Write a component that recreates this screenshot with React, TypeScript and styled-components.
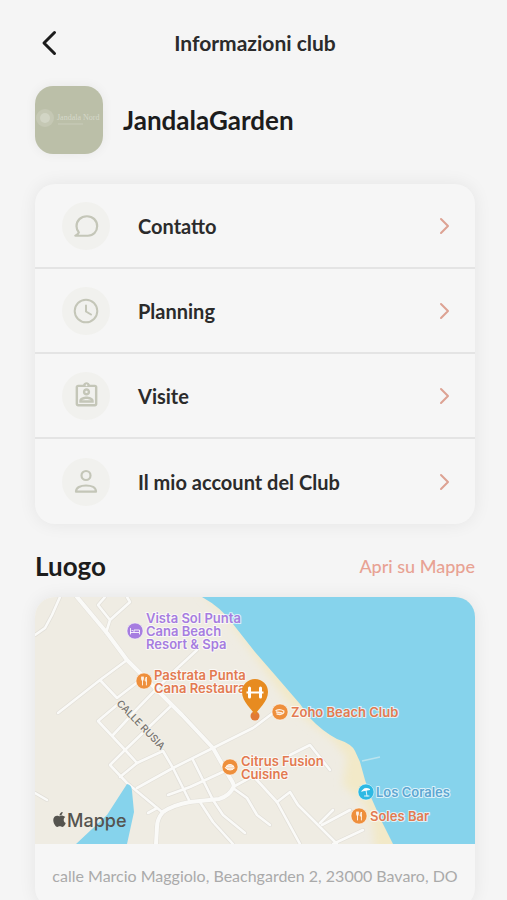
import React from "react";
import styled, { createGlobalStyle } from "styled-components";
import { FaApple } from "react-icons/fa";
import { MdOutlineAssignmentInd } from "react-icons/md";

const GlobalStyle = createGlobalStyle`
  *, *::before, *::after { box-sizing: border-box; }
  body { margin: 0; background: #f5f5f5; color: #2b2b2b; font-family: Lato, "Liberation Sans", sans-serif; }
`;

const Page = styled.div`
  height: 100vh;
  overflow-y: auto;
  scrollbar-width: none;
  padding: 20px 32px 32px 35px;
`;

const TopBar = styled.header`
  display: grid;
  grid-template-columns: 48px 1fr 48px;
  align-items: center;
  height: 46px;
`;

const BackButton = styled.button`
  display: flex;
  padding: 0 0 0 6px;
  border: 0;
  background: none;
  color: #1c1c1c;
`;

const Title = styled.h1`
  margin: 0;
  text-align: center;
  font-size: 21px;
  line-height: 24px;
  font-weight: 700;
`;

const ClubHeader = styled.section`
  display: flex;
  align-items: center;
  gap: 20px;
  margin: 20px 0 30px;
`;

const Logo = styled.svg`
  flex: none;
  border-radius: 18px;
  box-shadow: 0 0 12px rgba(0, 0, 0, 0.06);
`;

const Heading = styled.h2`
  margin: 0;
  font-size: 26px;
  line-height: 32px;
  font-weight: 700;
  color: #1c1c1c;
`;

const Card = styled.div`
  overflow: hidden;
  border-radius: 20px;
  background: #f6f6f6;
  box-shadow: 0 0 18px rgba(0, 0, 0, 0.07);
`;

const Menu = styled(Card).attrs({ as: "nav" })``;

const MenuRow = styled.button`
  display: flex;
  align-items: center;
  width: 100%;
  height: 85px;
  padding: 0 24px 0 27px;
  border: 0;
  background: none;
  color: inherit;
  font: inherit;
  text-align: left;

  &:not(:last-child) { border-bottom: 2px solid #e4e4e4; }
`;

const IconDisc = styled.span`
  display: flex;
  align-items: center;
  justify-content: center;
  width: 48px;
  height: 48px;
  border-radius: 50%;
  background: #f1f1ee;
  color: #c4c6b8;
`;

const RowLabel = styled.span`
  flex: 1;
  margin-left: 28px;
  font-size: 20px;
  line-height: 24px;
  font-weight: 700;
`;

const SectionHead = styled.div`
  display: flex;
  align-items: center;
  justify-content: space-between;
  margin: 26px 0 15px;
`;

const MapLink = styled.a`
  font-size: 18px;
  line-height: 24px;
  font-weight: 500;
  color: #e8a293;
  text-decoration: none;
`;

const MapDrawing = styled.svg`
  display: block;
  width: 100%;
  height: 247px;
`;

const PlaceText = styled.text`
  font-family: Inter, sans-serif;
  font-size: 13px;
  font-weight: 600;
  paint-order: stroke;
  stroke: #ffffff;
  stroke-opacity: 0.7;
  stroke-width: 2px;
  stroke-linejoin: round;
`;

const StreetText = styled.text`
  font-family: Inter, sans-serif;
  font-size: 10px;
  font-weight: 500;
  fill: #77746f;
  paint-order: stroke;
  stroke: #f3f0e8;
  stroke-width: 2px;
`;

const BrandText = styled.text`
  font-family: Inter, sans-serif;
  font-size: 18px;
  font-weight: 500;
  fill: #55544f;
`;

const Address = styled.address`
  padding: 20px 12px;
  font-size: 16px;
  line-height: 24px;
  font-style: normal;
  text-align: center;
  color: #aaaaaa;
`;

const ChatIcon = () => (
  <svg width="26" height="26" viewBox="0 0 28 28" fill="none" stroke="currentColor" strokeWidth="2.4" strokeLinejoin="round">
    <path d="M2.5 24.500H16C21.800 24.500 26 20.200 26 14.200S21.500 3.500 15 3.500C8.300 3.500 3.800 8.300 3.800 14.200c0 2.800.9 4.800 2.500 6.700-.6 1.700-1.800 2.900-3.800 3.600Z" />
  </svg>
);

const ClockIcon = () => (
  <svg width="28" height="28" viewBox="0 0 28 28" fill="none" stroke="currentColor" strokeWidth="2" strokeLinecap="round">
    <circle cx="14" cy="14" r="11.3" />
    <path d="M14 8.500v6l5 3" />
  </svg>
);

const PersonIcon = () => (
  <svg width="28" height="28" viewBox="0 0 28 28" fill="none" stroke="currentColor" strokeWidth="2.2" strokeLinejoin="round">
    <circle cx="14" cy="7.500" r="4.500" />
    <path d="M4 23.700H24C24 19.500 19.500 17.500 14 17.500S4 19.500 4 23.700Z" />
  </svg>
);

const Chevron = () => (
  <svg width="13" height="20" viewBox="0 0 13 20" fill="none" stroke="#dda293" strokeWidth="2" strokeLinecap="round" strokeLinejoin="round">
    <path d="m3 3 7 7-7 7" />
  </svg>
);

const rows = [
  { label: "Contatto", icon: <ChatIcon /> },
  { label: "Planning", icon: <ClockIcon /> },
  { label: "Visite", icon: <MdOutlineAssignmentInd size={29} /> },
  { label: "Il mio account del Club", icon: <PersonIcon /> },
];

const roads = [
  "M25 0 17 18 10 31 0 38",
  "M70 0 63 8 75 23 95 5 92 0M75 23 71 36",
  "M92 63 65 83 23 116M65 83 82 101 104 84",
  "M82 108 63 124 92 155 102 166",
  "M162 53 135 78 102 112 78 138",
  "M137 108 90 153 75 168 92 186 127 215",
  "M85 180 102 166 128 154 138 171 155 205",
  "M102 191 138 171 178 151 218 131 238 116",
  "M158 163 178 203 188 218 210 236",
  "M133 198 155 190 190 174",
  "M113 216 122 211",
  "M165 205 178 225 198 247",
  "M198 191 212 201 222 218 235 228",
  "M198 190 222 177",
  "M220 181 242 205 265 247",
  "M242 205 255 195 263 208 302 247",
  "M285 226 298 213M287 228 315 213M298 247 328 233",
  "M255 158 275 148 295 173",
  "M0 196 12 203M137 108 152 123",
];

const mainRoads = [
  "M42 0 72 36 92 63 115 86 147 118 178 151 195 181Q200 188 198 191Q194 199 184 202L155 205Q138 208 128 215Q122 222 122 230L121 247",
];

const orange = "#e37a50";

const places = [
  { x: 111, y: 26, step: 13, fill: "#a67de0", lines: ["Vista Sol Punta", "Cana Beach", "Resort & Spa"] },
  { x: 119, y: 83, step: 13, fill: orange, lines: ["Pastrata Punta", "Cana Restaura"] },
  { x: 256, y: 120, step: 13, fill: orange, lines: ["Zoho Beach Club"] },
  { x: 206, y: 169, step: 13, fill: orange, lines: ["Citrus Fusion", "Cuisine"] },
  { x: 341, y: 200, step: 13, fill: "#5da6d2", lines: ["Los Corales"] },
  { x: 335, y: 224, step: 13, fill: orange, lines: ["Soles Bar"] },
];

const fork = "M-2.4-4v2.6q0 1 .9 1V4m.9-8v2.6q0 1-.9 1V-4M2.4 4V-4q-1.3 1-1.2 4h1.2";

const badges = [
  { x: 100, y: 34, fill: "#a67de0", glyph: <path d="M-4.500-2.500V3M-4.500 1.500H4.500V3M4.500 1V-1H-1V1M-3-.5h.5" /> },
  { x: 109, y: 84, fill: "#ee8f3c", glyph: <path d={fork} /> },
  { x: 245, y: 115, fill: "#ee8f3c", glyph: <path d="M-4-1.500Q0-3.500 3.800-1 4.500 2 0 2.500L-3 2M-3.500 0 2 .8" strokeWidth="1.300" /> },
  { x: 195, y: 170, fill: "#ee8f3c", glyph: <path fill="#fff" fillOpacity="0.7" d="M-4.500.8H4.500Q3.500 3 0 3T-4.500.8ZM-3.800-.8Q0-4.500 3.800-.8Z" /> },
  { x: 331, y: 195, fill: "#2db9e3", glyph: <path d="M-4-1Q-1.500-5.500 4-2.500L-4-1ZM0-2 1 4M-1.500 4H3" fill="#fff" /> },
  { x: 324, y: 219, fill: "#ee8f3c", glyph: <path d={fork} /> },
];

const MapPicture = () => (
  <MapDrawing viewBox="0 0 440 247" preserveAspectRatio="xMidYMid slice" role="img" aria-label="Mappa del club">
    <defs>
      <filter id="sandEdge" x="-10%" y="-10%" width="120%" height="120%">
        <feGaussianBlur stdDeviation="4" />
      </filter>
    </defs>
    <path fill="#efece3" d="M0 0H440V247H0Z" />
    <path fill="#f2e9c8" filter="url(#sandEdge)" d="M165-6 195 25 222 62 255 108 276 126 297 142 312 160 308 188 328 205 338 228 340 255H370V170L325 145 285 120 230 55 180 0Z" />
    <g fill="none" strokeLinecap="round" strokeLinejoin="round">
      <g stroke="#e2dfd8" strokeWidth="4">
        {roads.map((d) => <path key={d} d={d} />)}
        {mainRoads.map((d) => <path key={d} d={d} strokeWidth="5" />)}
      </g>
      <g stroke="#fafaf8" strokeWidth="2.600">
        {roads.map((d) => <path key={d} d={d} />)}
        {mainRoads.map((d) => <path key={d} d={d} strokeWidth="4" />)}
      </g>
    </g>
    <path fill="#86d3ec" d="M167 0Q187 11 198 27L220 55 240 78 265 107 275 121Q287 134 302 142 317 147 320 154L325 165 330 183 335 198 347 225 358 247H440V0Z" />
    <path fill="#86d3ec" d="M92 187Q97 188 97 194L99 215 92 247H41L72 218Z" />
    <path d="M327 164 345 160" fill="none" stroke="#b9e3ee" strokeWidth="1.500" />
    <StreetText transform="translate(81 107) rotate(46)">CALLE RUSIA</StreetText>
    {places.map((p) => (
      <PlaceText key={p.lines[0]} fill={p.fill}>
        {p.lines.map((line, i) => (
          <tspan key={line} x={p.x} y={p.y + i * p.step}>{line}</tspan>
        ))}
      </PlaceText>
    ))}
    {badges.map((b) => (
      <g key={`${b.x}-${b.y}`} transform={`translate(${b.x} ${b.y})`}>
        <circle r="8" fill={b.fill} stroke="#fff" strokeOpacity="0.5" />
        <g fill="none" stroke="#fff" strokeOpacity="0.85" strokeLinecap="round">{b.glyph}</g>
      </g>
    ))}
    <circle cx="220" cy="119" r="4.500" fill="#e17a36" />
    <path fill="#e78b20" d="M220 118C217 112 207 105 207 95a13 13 0 0 1 26 0C233 105 223 112 220 118Z" />
    <path d="M214 95.500H226M211.500 95.500H228.500" fill="none" stroke="#fff" strokeWidth="2" />
    <path d="M214.500 91V100M225.500 91V100" fill="none" stroke="#fff" strokeWidth="3" strokeLinecap="round" />
    <FaApple x={16} y={214} size={17} color="#55544f" />
    <BrandText x="32" y="230">Mappe</BrandText>
  </MapDrawing>
);

const ClubLogo = () => (
  <Logo width="68" height="68" viewBox="0 0 68 68" role="img" aria-label="Jandala Nord">
    <path fill="#bbbfa8" d="M0 0H68V68H0Z" />
    <circle cx="10" cy="32" r="9" fill="#c5c8b4" />
    <circle cx="10" cy="32" r="5" fill="#d2d5c5" />
    <text x="22" y="34" fontFamily="Liberation Serif, serif" fontSize="8" fill="#d5d8c9">Jandala Nord</text>
    <path d="M23 38H48" stroke="#c9ccba" />
  </Logo>
);

export default function App() {
  return (
    <>
      <GlobalStyle />
      <Page>
        <TopBar>
          <BackButton type="button" aria-label="Indietro">
            <svg width="16" height="26" viewBox="0 0 16 26" fill="none" stroke="currentColor" strokeWidth="3" strokeLinecap="round" strokeLinejoin="round">
              <path d="M13.500 2.500 3 13l10.500 10.500" />
            </svg>
          </BackButton>
          <Title>Informazioni club</Title>
        </TopBar>
        <ClubHeader>
          <ClubLogo />
          <Heading>JandalaGarden</Heading>
        </ClubHeader>
        <Menu>
          {rows.map((row) => (
            <MenuRow key={row.label} type="button">
              <IconDisc>{row.icon}</IconDisc>
              <RowLabel>{row.label}</RowLabel>
              <Chevron />
            </MenuRow>
          ))}
        </Menu>
        <SectionHead>
          <Heading>Luogo</Heading>
          <MapLink href="#mappe">Apri su Mappe</MapLink>
        </SectionHead>
        <Card>
          <MapPicture />
          <Address>calle Marcio Maggiolo, Beachgarden 2, 23000 Bavaro, DO</Address>
        </Card>
      </Page>
    </>
  );
}
